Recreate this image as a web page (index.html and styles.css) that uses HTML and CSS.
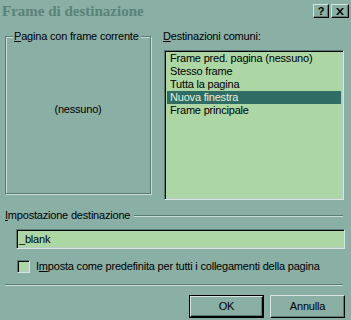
FILE: index.html
```html
<!DOCTYPE html>
<html>
<head>
<meta charset="utf-8">
<link rel="stylesheet" href="styles.css">
</head>
<body>
<div class="dialog">
  <div class="titlebar">
    <span class="title">Frame di destinazione</span>
    <span class="cap-btns">
      <span class="cap-btn help">?</span>
      <span class="cap-btn close">
        <svg width="8" height="7" viewBox="0 0 8 7"><path d="M0 0h2l2 2.5L6 0h2L5 3.5 8 7H6L4 4.5 2 7H0l3-3.5z" fill="#000"/></svg>
      </span>
    </span>
  </div>

  <div class="main">
    <fieldset class="group">
      <legend><u>P</u>agina con frame corrente</legend>
      <div class="none">(nessuno)</div>
    </fieldset>
    <div class="common">
      <div class="common-label"><u>D</u>estinazioni comuni:</div>
      <div class="listbox sunken">
        <div class="item">Frame pred. pagina (nessuno)</div>
        <div class="item">Stesso frame</div>
        <div class="item">Tutta la pagina</div>
        <div class="item selected">Nuova finestra</div>
        <div class="item">Frame principale</div>
      </div>
    </div>
  </div>

  <div class="section">
    <span class="section-label"><u>I</u>mpostazione destinazione</span>
    <span class="etched-line"></span>
  </div>

  <div class="target sunken">_blank</div>

  <div class="check-row">
    <span class="checkbox sunken"></span>
    <span class="check-label">I<u>m</u>posta come predefinita per tutti i collegamenti della pagina</span>
  </div>

  <div class="separator"></div>

  <div class="buttons">
    <div class="btn default"><span class="btn-in">OK</span></div>
    <div class="btn"><span class="btn-in">Annulla</span></div>
  </div>
</div>
</body>
</html>
```

FILE: styles.css
```css
html, body {
  margin: 0;
  padding: 0;
  background: #8aafa5;
}

.dialog {
  width: 351px;
  height: 320px;
  overflow: hidden;
  background: #8aafa5;
  font-family: "Liberation Sans", Arial, sans-serif;
  font-size: 11px;
  line-height: 13px;
  letter-spacing: -0.2px;
  color: #000;
  display: flex;
  flex-direction: column;
}

u { text-decoration: underline; text-underline-offset: 1px; }

.titlebar {
  height: 21px;
  display: flex;
  align-items: flex-start;
  justify-content: space-between;
}

.title {
  font-family: "Liberation Serif", "Times New Roman", serif;
  font-weight: bold;
  font-size: 15px;
  line-height: 16px;
  letter-spacing: 0;
  color: #5b8276;
  padding: 3px 0 0 2px;
}

.cap-btns {
  display: flex;
  gap: 2px;
  margin: 4px 2px 0 0;
}

.cap-btn {
  width: 14px;
  height: 12px;
  border: 1px solid;
  border-color: #d4e6df #000 #000 #d4e6df;
  box-shadow: inset -1px -1px 0 #5a7c72;
  background: #8aafa5;
  display: flex;
  align-items: center;
  justify-content: center;
  font-weight: bold;
  font-size: 11px;
  line-height: 12px;
  letter-spacing: 0;
}

.cap-btn.close { width: 16px; }

.main {
  display: flex;
  margin-top: 9px;
  height: 170px;
}

.group {
  margin: 0 0 0 5px;
  padding: 0;
  width: 146px;
  height: 164px;
  box-sizing: border-box;
  border: 1px solid #5a7c72;
  box-shadow: inset 1px 1px 0 #c8ddd6, 1px 1px 0 #c8ddd6;
  min-width: 0;
}

.group legend {
  margin-left: 7px;
  padding: 0 2px 0 1px;
  background: #8aafa5;
  line-height: 13px;
}

.none {
  text-align: center;
  margin-top: 60px;
}

.common {
  margin-left: 12px;
  display: flex;
  flex-direction: column;
}

.common-label {
  height: 13px;
  margin-bottom: 7px;
}

.sunken {
  border: 1px solid;
  border-color: #5a7c72 #d4e6df #d4e6df #5a7c72;
  box-shadow: inset 1px 1px 0 #000, inset -1px -1px 0 #b4ccc5;
}

.listbox {
  width: 180px;
  height: 150px;
  box-sizing: border-box;
  margin-left: 1px;
  background: #acd6a4;
  padding: 1px 2px;
}

.item {
  height: 13px;
  line-height: 13px;
  padding-left: 3px;
  white-space: nowrap;
}

.item.selected {
  background: #2f6c63;
  color: #e4f2dc;
}

.section {
  display: flex;
  align-items: center;
  margin: 9px 8px 0 5px;
  height: 13px;
}

.etched-line {
  flex: 1;
  height: 0;
  margin-left: 4px;
  border-top: 1px solid #5a7c72;
  border-bottom: 1px solid #c8ddd6;
}

.target {
  margin: 7px 6px 0 16px;
  height: 20px;
  box-sizing: border-box;
  background: #acd6a4;
  padding: 2px 0 0 2px;
  line-height: 15px;
}

.check-row {
  display: flex;
  align-items: center;
  margin: 11px 0 0 17px;
  height: 13px;
}

.checkbox {
  width: 13px;
  height: 13px;
  box-sizing: border-box;
  background: #acd6a4;
  margin-right: 6px;
}

.separator {
  margin: 11px 8px 0 5px;
  border-top: 1px solid #5a7c72;
  border-bottom: 1px solid #c8ddd6;
}

.buttons {
  display: flex;
  justify-content: flex-end;
  gap: 6px;
  margin: 9px 6px 0 0;
}

.btn {
  width: 75px;
  height: 23px;
  box-sizing: border-box;
  border: 1px solid;
  border-color: #d4e6df #000 #000 #d4e6df;
  box-shadow: inset -1px -1px 0 #5a7c72;
  display: flex;
}

.btn.default {
  border: 1px solid #000;
  box-shadow: none;
}

.btn-in {
  flex: 1;
  display: flex;
  align-items: center;
  justify-content: center;
}

.btn.default .btn-in {
  border: 1px solid;
  border-color: #d4e6df #000 #000 #d4e6df;
  box-shadow: inset -1px -1px 0 #5a7c72;
}
```
